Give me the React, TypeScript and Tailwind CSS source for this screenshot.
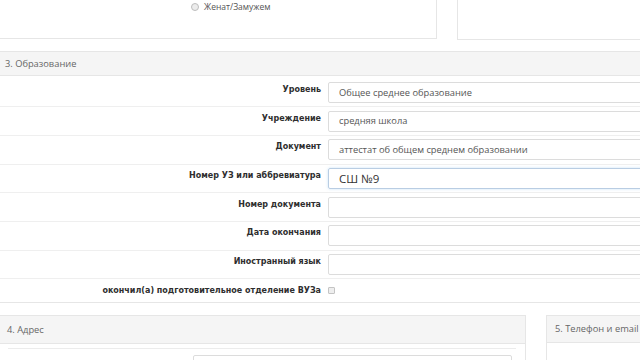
const rows = [
  { label: 'Уровень', value: 'Общее среднее образование' },
  { label: 'Учреждение', value: 'средняя школа' },
  { label: 'Документ', value: 'аттестат об общем среднем образовании' },
  { label: 'Номер УЗ или аббревиатура', value: 'СШ №9', focused: true },
  { label: 'Номер документа', value: '' },
  { label: 'Дата окончания', value: '' },
  { label: 'Иностранный язык', value: '' },
];

const labelFont = "font-['DejaVu_Sans',Verdana,sans-serif] text-[8px] font-bold text-[#2e2e2e]";
const textFont = "font-['Open_Sans','Noto_Sans',sans-serif]";

function FormRow({ label, value, focused }: { label: string; value: string; focused?: boolean }) {
  return (
    <div className="flex border-b border-[#efefef] pb-[3.2px] pt-[3.5px]">
      <div className={`w-[322px] shrink-0 pt-[2px] text-right ${labelFont}`}>{label}</div>
      <div
        className={`ml-[7px] flex h-[21px] flex-1 items-center rounded-[2px] border pl-[10px] ${
          focused
            ? 'border-[#b9cde3] text-[11.5px] text-[#333] shadow-[0_0_3px_rgba(102,175,233,0.35)]'
            : 'border-[#dcdcdc] text-[9.3px] text-[#555]'
        } ${textFont}`}
      >
        {value}
      </div>
    </div>
  );
}

export default function App() {
  return (
    <div className="h-[360px] w-[640px] overflow-hidden bg-white">
      <div className="-ml-[2px] w-[670px]">
        {/* top panels */}
        <div className="-mt-[20px] flex items-start">
          <div className="h-[59px] w-[439px] border border-[#e6e6e6] pl-[192px] pt-[20px]">
            <div className="flex items-center gap-[5px]">
              <span className="h-[8px] w-[8px] rounded-full border border-[#bdbdbd] bg-[#ececec]" />
              <span className={`text-[8.5px] text-[#555] ${textFont}`}>Женат/Замужем</span>
            </div>
          </div>
          <div className="ml-[20px] h-[60px] flex-1 border border-[#e6e6e6]" />
        </div>

        {/* 3. Образование */}
        <div className="mt-[11px] border border-[#e6e6e6]">
          <div className={`flex h-[24px] items-center border-b border-[#e6e6e6] bg-[#f5f5f5] pl-[6px] text-[9.3px] text-[#666] ${textFont}`}>
            3. Образование
          </div>
          <div className="pt-[2.5px]">
            {rows.map((r) => (
              <FormRow key={r.label} {...r} />
            ))}
            <div className="flex h-[23px] items-center">
              <div className={`w-[322px] shrink-0 text-right ${labelFont}`}>
                окончил(а) подготовительное отделение ВУЗа
              </div>
              <span className="ml-[7px] h-[7px] w-[7px] rounded-[1px] border border-[#c4c4c4] bg-[#eeeeee]" />
            </div>
          </div>
        </div>

        {/* 4 / 5 */}
        <div className="mt-[12px] flex items-start">
          <div className="w-[528px] border border-[#e6e6e6]">
            <div className={`flex h-[28px] items-center border-b border-[#e6e6e6] bg-[#f5f5f5] pl-[8px] text-[9.3px] text-[#666] ${textFont}`}>
              4. Адрес
            </div>
            <div className="px-[9px] pt-[4px]">
              <div className="border-t border-[#ececec] pt-[6px]">
                <div className="ml-[185px] h-[20px] w-[319px] rounded-[2px] border border-[#dcdcdc]" />
              </div>
            </div>
          </div>
          <div className="ml-[20px] h-[60px] flex-1 border border-[#e6e6e6]">
            <div className={`flex h-[27px] items-center border-b border-[#e6e6e6] bg-[#f5f5f5] pl-[8px] text-[9.3px] text-[#666] ${textFont}`}>
              5. Телефон и email
            </div>
          </div>
        </div>
      </div>
    </div>
  );
}
